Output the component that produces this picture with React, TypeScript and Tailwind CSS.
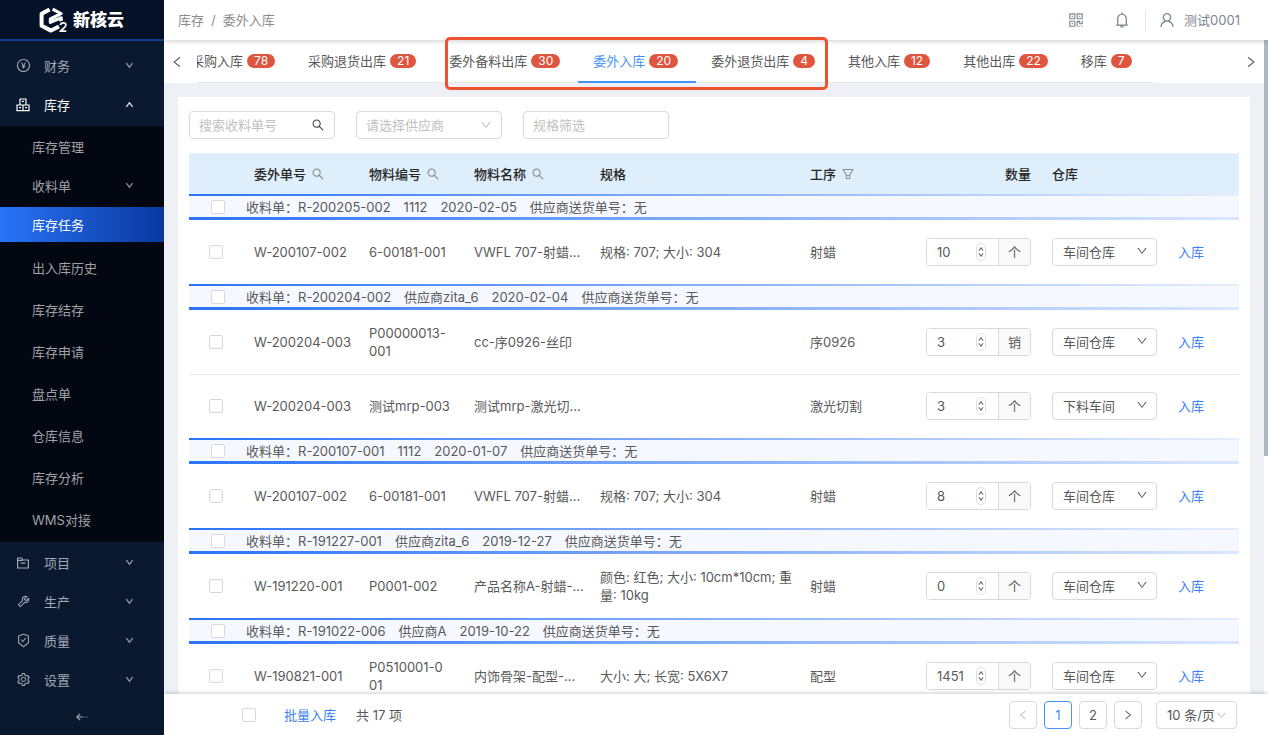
import { Fragment } from "react";
import type { ReactNode } from "react";
import {
  AiOutlineBell,
  AiOutlineDown,
  AiOutlineFilter,
  AiOutlineLeft,
  AiOutlinePayCircle,
  AiOutlineQrcode,
  AiOutlineRight,
  AiOutlineSafetyCertificate,
  AiOutlineSearch,
  AiOutlineSetting,
  AiOutlineTool,
  AiOutlineUp,
  AiOutlineUser,
} from "react-icons/ai";

type Item = {
  order: string;
  code: string;
  name: string;
  spec: string;
  process: string;
  qty: number;
  unit: string;
  store: string;
};

type Group = {
  receipt: string;
  supplier: string;
  date: string;
  items: Item[];
};

const groups: Group[] = [
  {
    receipt: "R-200205-002",
    supplier: "1112",
    date: "2020-02-05",
    items: [
      { order: "W-200107-002", code: "6-00181-001", name: "VWFL 707-射蜡...", spec: "规格: 707; 大小: 304", process: "射蜡", qty: 10, unit: "个", store: "车间仓库" },
    ],
  },
  {
    receipt: "R-200204-002",
    supplier: "供应商zita_6",
    date: "2020-02-04",
    items: [
      { order: "W-200204-003", code: "P00000013-\n001", name: "cc-序0926-丝印", spec: "", process: "序0926", qty: 3, unit: "销", store: "车间仓库" },
      { order: "W-200204-003", code: "测试mrp-003", name: "测试mrp-激光切...", spec: "", process: "激光切割", qty: 3, unit: "个", store: "下料车间" },
    ],
  },
  {
    receipt: "R-200107-001",
    supplier: "1112",
    date: "2020-01-07",
    items: [
      { order: "W-200107-002", code: "6-00181-001", name: "VWFL 707-射蜡...", spec: "规格: 707; 大小: 304", process: "射蜡", qty: 8, unit: "个", store: "车间仓库" },
    ],
  },
  {
    receipt: "R-191227-001",
    supplier: "供应商zita_6",
    date: "2019-12-27",
    items: [
      { order: "W-191220-001", code: "P0001-002", name: "产品名称A-射蜡-...", spec: "颜色: 红色; 大小: 10cm*10cm; 重\n量: 10kg", process: "射蜡", qty: 0, unit: "个", store: "车间仓库" },
    ],
  },
  {
    receipt: "R-191022-006",
    supplier: "供应商A",
    date: "2019-10-22",
    items: [
      { order: "W-190821-001", code: "P0510001-0\n01", name: "内饰骨架-配型-...", spec: "大小: 大; 长宽: 5X6X7", process: "配型", qty: 1451, unit: "个", store: "车间仓库" },
    ],
  },
];

const tabs = [
  { label: "采购入库", count: 78 },
  { label: "采购退货出库", count: 21 },
  { label: "委外备料出库", count: 30 },
  { label: "委外入库", count: 20, active: true },
  { label: "委外退货出库", count: 4 },
  { label: "其他入库", count: 12 },
  { label: "其他出库", count: 22 },
  { label: "移库", count: 7 },
];

function Logo() {
  return (
    <svg viewBox="0 0 30 26" className="h-[26px] w-[30px]" fill="none" aria-hidden="true">
      <path d="M10.6 2.4 2.6 6.8v12L12 23.6l8-4.2" stroke="#fff" strokeWidth="4" strokeLinejoin="round" />
      <path d="M13.6 2.2 22 6.6 11.4 12v3.4l10.8-4.6V17" stroke="#fff" strokeWidth="3.2" strokeLinejoin="round" />
      <path d="M21.4 18.2c.3-1.6 1.3-2.3 2.8-2.3 1.6 0 2.7.8 2.7 2.2 0 2.2-3.2 3.4-5.2 6h5.6" stroke="#051126" strokeWidth="4.4" />
      <path d="M21.4 18.2c.3-1.6 1.3-2.3 2.8-2.3 1.6 0 2.7.8 2.7 2.2 0 2.2-3.2 3.4-5.2 6h5.6" stroke="#fff" strokeWidth="1.7" />
    </svg>
  );
}

function BoxesIcon() {
  return (
    <svg viewBox="0 0 14 14" className="size-[14px]" fill="none" stroke="currentColor" strokeWidth="1.2" aria-hidden="true">
      <path d="M4 1h6v6H4zM1 7h6v5.6H1zM7 7h6v5.6H7zM6 3.4h2M3 9.6h2M9 9.6h2" />
    </svg>
  );
}

function FolderIcon() {
  return (
    <svg viewBox="0 0 14 14" className="size-[14px]" fill="none" stroke="currentColor" strokeWidth="1.2" aria-hidden="true">
      <path d="M1.6 12V2h4l1.2 2h5.6v8zM1.6 4.4h5M4.6 7.2h4.8" />
    </svg>
  );
}

function CollapseIcon() {
  return (
    <svg viewBox="0 0 12 8" className="h-2 w-3" fill="none" stroke="currentColor" strokeWidth="1.2" aria-hidden="true">
      <path d="M4 .8.9 4 4 7.2M1 4h6M8 4h.9M10.6 4h1" />
    </svg>
  );
}

function NavItem({ icon, label, open }: { icon: ReactNode; label: string; open?: boolean }) {
  return (
    <a href="#" className={`flex h-[39px] items-center pr-[30px] pl-[15px] ${open ? "text-white" : "text-[#a1a8b3]"}`}>
      <span className="flex w-[29px] items-center pl-px text-[15px]">{icon}</span>
      <span className="flex-1">{label}</span>
      {open ? <AiOutlineUp className="size-[9px] stroke-current stroke-[60px]" /> : <AiOutlineDown className="size-[9px] stroke-current stroke-[60px]" />}
    </a>
  );
}

function SubItem({ label, active, expandable }: { label: string; active?: boolean; expandable?: boolean }) {
  return (
    <li>
      <a
        href="#"
        className={`flex h-[35px] items-center justify-between pr-[30px] pl-8 ${
          active ? "bg-linear-to-r from-[#2a74f8] to-[#0a389f] text-white" : "text-[#a0a2a6]"
        }`}
      >
        {label}
        {expandable && <AiOutlineDown className="size-[9px] stroke-current stroke-[60px]" />}
      </a>
    </li>
  );
}

function Sidebar() {
  return (
    <aside className="flex w-[164px] shrink-0 flex-col bg-[#0a1930]">
      <div className="flex h-[41px] shrink-0 items-center gap-1 border-b-2 border-[#123f8c] bg-[#051126] pl-[39px]">
        <Logo />
        <span className="text-[17px] font-black text-white">新核云</span>
      </div>
      <nav className="flex flex-1 flex-col">
        <div className="pt-[5px] pb-[2px]">
          <NavItem icon={<AiOutlinePayCircle />} label="财务" />
          <NavItem icon={<BoxesIcon />} label="库存" open />
        </div>
        <div className="bg-[#020712] pt-[3px] pb-[5px]">
          <ul className="flex flex-col gap-1">
            <SubItem label="库存管理" />
            <SubItem label="收料单" expandable />
            <SubItem label="库存任务" active />
          </ul>
          <ul className="flex flex-col gap-[7px] pt-2">
            <SubItem label="出入库历史" />
            <SubItem label="库存结存" />
            <SubItem label="库存申请" />
            <SubItem label="盘点单" />
            <SubItem label="仓库信息" />
            <SubItem label="库存分析" />
            <SubItem label="WMS对接" />
          </ul>
        </div>
        <div className="pt-px">
          <NavItem icon={<FolderIcon />} label="项目" />
          <NavItem icon={<AiOutlineTool />} label="生产" />
          <NavItem icon={<AiOutlineSafetyCertificate />} label="质量" />
          <NavItem icon={<AiOutlineSetting />} label="设置" />
        </div>
        <button type="button" aria-label="收起菜单" className="mt-auto flex h-9 items-center justify-center text-[#a1a8b3]">
          <CollapseIcon />
        </button>
      </nav>
    </aside>
  );
}

function TopBar() {
  return (
    <header className="relative z-10 flex h-10 shrink-0 items-center justify-between bg-white pr-7 pl-[14px] text-[#8c8c8c] shadow-[0_1px_5px_rgba(0,0,0,0.2)]">
      <div className="flex gap-[7px]">
        <a href="#">库存</a>
        <span>/</span>
        <span>委外入库</span>
      </div>
      <div className="flex items-center text-[#7d8590]">
        <button type="button" aria-label="二维码" className="mr-7">
          <AiOutlineQrcode className="size-[18px]" />
        </button>
        <button type="button" aria-label="通知" className="mr-[14px]">
          <AiOutlineBell className="size-[18px]" />
        </button>
        <span className="mr-3 h-[21px] w-px bg-[#e4e6e9]" />
        <a href="#" className="flex items-center gap-2">
          <AiOutlineUser className="size-[18px]" />
          测试0001
        </a>
      </div>
    </header>
  );
}

function TabBar() {
  return (
    <div className="relative flex h-[43px] shrink-0 bg-white text-[#595959]">
      <button type="button" aria-label="向左" className="flex w-[33px] shrink-0 items-center pl-[6px]">
        <AiOutlineLeft className="size-[14px]" />
      </button>
      <div className="min-w-0 flex-1 overflow-hidden">
        <ul className="-ml-[21px] flex h-[43px] w-fit border-b border-[#e8e8e8] pr-1">
          {tabs.map((tab) => (
            <li key={tab.label} className="shrink-0">
              <a
                href="#"
                className={`flex h-[43px] items-center gap-1 border-b-2 pr-[18px] pl-[15px] whitespace-nowrap ${
                  tab.active ? "border-[#4594f7] text-[#4594f7]" : "border-transparent"
                }`}
              >
                {tab.label}
                <span className="flex h-[14px] items-center rounded-full bg-[#df5640] px-[7px] text-[12px] text-white">{tab.count}</span>
              </a>
            </li>
          ))}
        </ul>
      </div>
      <button type="button" aria-label="向右" className="flex w-8 shrink-0 items-center justify-end pr-[6px]">
        <AiOutlineRight className="size-[14px]" />
      </button>
      <div className="pointer-events-none absolute -top-[3px] left-[281px] z-20 h-[53px] w-[383px] rounded-[5px] border-[3px] border-[#ee5330]" />
    </div>
  );
}

function Check({ label }: { label: string }) {
  return (
    <input
      type="checkbox"
      aria-label={label}
      className="block size-[14px] shrink-0 appearance-none rounded-[2px] border border-[#d9d9d9] bg-white"
    />
  );
}

function Filters() {
  const box = "h-7 w-[146px] rounded-[4px] border border-[#d9d9d9] bg-white pl-[9px] placeholder:text-[#bfbfbf]";
  return (
    <div className="flex gap-[21px]">
      <div className="relative">
        <input aria-label="搜索收料单号" placeholder="搜索收料单号" className={box} />
        <AiOutlineSearch className="absolute top-[7px] right-[10px] size-[14px] text-[#404040]" />
      </div>
      <div className="relative">
        <select aria-label="供应商" className={`${box} appearance-none text-[#bfbfbf]`}>
          <option>请选择供应商</option>
        </select>
        <AiOutlineDown className="pointer-events-none absolute top-2 right-[10px] size-3 text-[#bfbfbf]" />
      </div>
      <input aria-label="规格筛选" placeholder="规格筛选" className={box} />
    </div>
  );
}

function Quantity({ item }: { item: Item }) {
  return (
    <div className="flex h-7 w-[105px] overflow-hidden rounded-[4px] border border-[#d9d9d9]">
      <div className="relative flex-1">
        <input
          type="number"
          aria-label={`${item.order} 数量`}
          defaultValue={item.qty}
          className="h-full w-[70px] bg-white pl-[10px] [appearance:textfield] [&::-webkit-inner-spin-button]:appearance-none"
        />
        <span className="pointer-events-none absolute top-[4px] right-[12px] flex h-[18px] w-[10px] flex-col items-center justify-between rounded-full border border-[#dedede] bg-white py-[2px] text-[#404040]">
          <AiOutlineUp className="size-[6px] shrink-0 stroke-current stroke-[60px]" />
          <AiOutlineDown className="size-[6px] shrink-0 stroke-current stroke-[60px]" />
        </span>
      </div>
      <span className="flex w-8 items-center justify-center border-l border-[#d9d9d9] bg-[#fafafa]">{item.unit}</span>
    </div>
  );
}

function ItemRow({ item, divided }: { item: Item; divided: boolean }) {
  return (
    <tr className={`h-16 ${divided ? "border-b border-[#e8e8e8]" : ""}`}>
      <td className="pl-5">
        <Check label={`选择 ${item.order}`} />
      </td>
      <td className="pl-[10px] whitespace-nowrap">{item.order}</td>
      <td className="pl-[10px] whitespace-pre">{item.code}</td>
      <td className="pl-[10px] whitespace-nowrap">{item.name}</td>
      <td className="pl-[10px] whitespace-pre">{item.spec}</td>
      <td className="pl-[10px]">{item.process}</td>
      <td className="pl-[10px]">
        <Quantity item={item} />
      </td>
      <td className="pl-[10px]">
        <div className="relative w-[105px]">
          <select
            aria-label={`${item.order} 仓库`}
            className="block h-7 w-full appearance-none rounded-[4px] border border-[#d9d9d9] bg-white pl-[10px]"
          >
            <option>{item.store}</option>
          </select>
          <AiOutlineDown className="pointer-events-none absolute top-[7px] right-[9px] size-3" />
        </div>
      </td>
      <td className="pl-[10px]">
        <a href="#" className="text-[#3a7ff5]">入库</a>
      </td>
    </tr>
  );
}

function GroupRow({ group }: { group: Group }) {
  return (
    <tr>
      <td colSpan={9} className="p-0">
        <div className="h-[2px] bg-linear-to-r/srgb from-[#2a73f8] to-[#e6eefc]" />
        <div className="flex h-[21px] items-center bg-[#f5f8ff] pl-[22px] whitespace-nowrap">
          <Check label={`选择 ${group.receipt}`} />
          <div className="flex gap-[13px] pl-[21px]">
            <span>收料单：{group.receipt}</span>
            <span>{group.supplier}</span>
            <span>{group.date}</span>
            <span>供应商送货单号：无</span>
          </div>
        </div>
        <div className="h-[3px] bg-linear-to-r/srgb from-[#2a73f8] to-[#dbe7fd]" />
      </td>
    </tr>
  );
}

function HeadCell({ label, icon }: { label: string; icon?: "search" | "filter" }) {
  return (
    <th scope="col" className="pl-[10px] text-left font-medium">
      <span className="flex items-center gap-[5px]">
        {label}
        {icon === "search" && <AiOutlineSearch className="size-[14px] text-[#808890]" />}
        {icon === "filter" && <AiOutlineFilter className="size-[14px] text-[#808890]" />}
      </span>
    </th>
  );
}

function TaskTable() {
  return (
    <table className="mt-[14px] w-full table-fixed border-collapse text-[#595959]">
      <colgroup>
        <col className="w-[55px]" />
        <col className="w-[115px]" />
        <col className="w-[105px]" />
        <col className="w-[126px]" />
        <col />
        <col className="w-[116px]" />
        <col className="w-[126px]" />
        <col className="w-[126px]" />
        <col className="w-[71px]" />
      </colgroup>
      <thead>
        <tr className="h-[41px] bg-[#dfeefb] text-[#262626]">
          <td />
          <HeadCell label="委外单号" icon="search" />
          <HeadCell label="物料编号" icon="search" />
          <HeadCell label="物料名称" icon="search" />
          <HeadCell label="规格" />
          <HeadCell label="工序" icon="filter" />
          <th scope="col" className="pr-[11px] text-right font-medium">数量</th>
          <HeadCell label="仓库" />
          <td />
        </tr>
      </thead>
      <tbody>
        {groups.map((group) => (
          <Fragment key={group.receipt}>
            <GroupRow group={group} />
            {group.items.map((item, i) => (
              <ItemRow key={item.code} item={item} divided={i < group.items.length - 1} />
            ))}
          </Fragment>
        ))}
      </tbody>
    </table>
  );
}

function FooterBar() {
  const page = "flex size-7 items-center justify-center rounded-[4px] border bg-white";
  return (
    <footer className="relative z-10 flex h-[41px] shrink-0 items-center justify-between bg-white pr-[31px] pl-[78px] text-[#595959] shadow-[0_-1px_4px_rgba(0,0,0,0.2)]">
      <div className="flex items-center">
        <Check label="全选" />
        <a href="#" className="ml-7 text-[#3a7ff5]">批量入库</a>
        <span className="ml-5">共 17 项</span>
      </div>
      <div className="flex gap-[7px]">
        <button type="button" aria-label="上一页" className={`${page} border-[#d9d9d9] text-[#bfbfbf]`}>
          <AiOutlineLeft className="size-3" />
        </button>
        <button type="button" className={`${page} border-[#4594f7] text-[#4594f7]`}>1</button>
        <button type="button" className={`${page} border-[#d9d9d9]`}>2</button>
        <button type="button" aria-label="下一页" className={`${page} border-[#d9d9d9]`}>
          <AiOutlineRight className="size-3" />
        </button>
        <div className="relative ml-[7px]">
          <select aria-label="每页条数" className="block h-7 w-[81px] appearance-none rounded-[4px] border border-[#d9d9d9] bg-white pl-[10px]">
            <option>10 条/页</option>
          </select>
          <AiOutlineDown className="pointer-events-none absolute top-[9px] right-[10px] size-[11px] text-[#bfbfbf]" />
        </div>
      </div>
    </footer>
  );
}

export default function App() {
  return (
    <div className="flex h-screen overflow-hidden bg-white font-['Inter','Noto_Sans_CJK_SC',sans-serif] text-[13px] leading-[18px]">
      <Sidebar />
      <div className="flex min-w-0 flex-1 flex-col">
        <TopBar />
        <div className="relative flex min-h-0 flex-1 flex-col pr-1">
          <TabBar />
          <main className="min-h-0 flex-1 overflow-hidden bg-[#eff0f5] px-[14px] pt-[14px]">
            <div className="bg-white px-[11px] pt-[14px] pb-6">
              <Filters />
              <TaskTable />
            </div>
          </main>
          <div className="absolute top-0 right-0 h-[416px] w-1 bg-[#aeb6c0]" />
        </div>
        <FooterBar />
      </div>
    </div>
  );
}
